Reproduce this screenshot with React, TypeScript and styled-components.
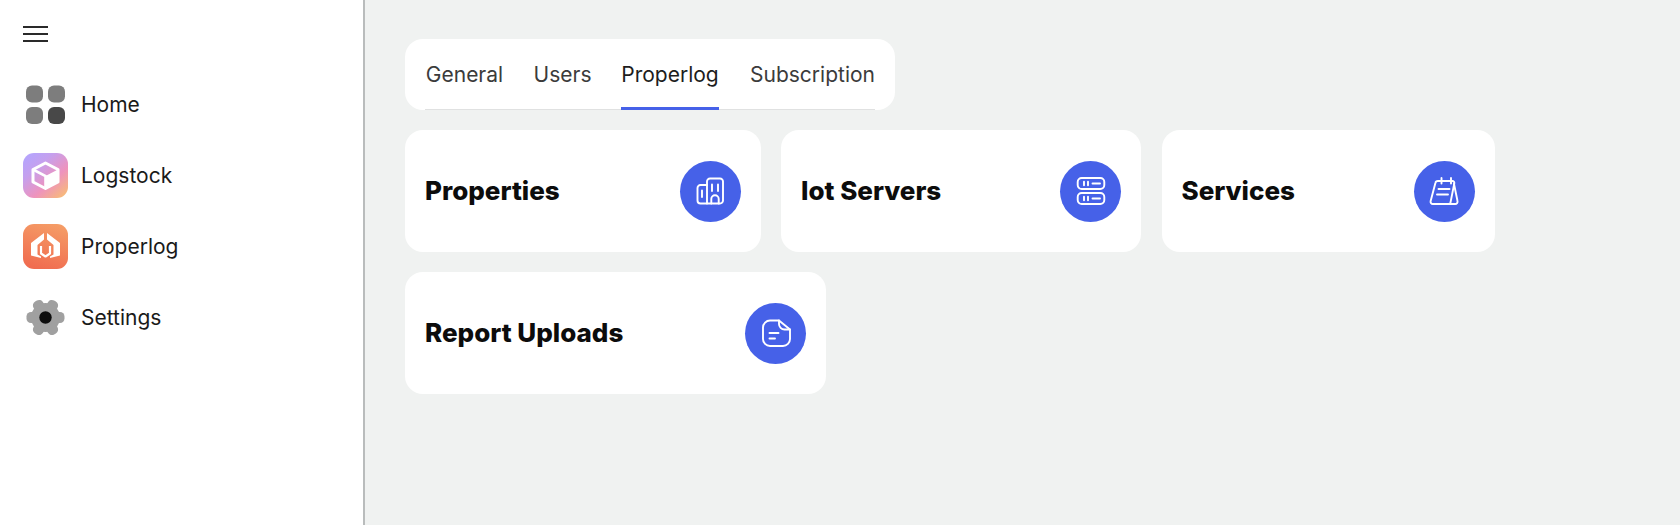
import * as React from "react";
import styled, { createGlobalStyle } from "styled-components";

const Global = createGlobalStyle`
  html, body { margin: 0; padding: 0; height: 100%; }
  body { font-family: "Inter", "Noto Sans", sans-serif; background: #f0f2f1; }
  #root { height: 100%; }
`;

const navItems = [
  { label: "Home", icon: <HomeIcon /> },
  { label: "Logstock", icon: <LogstockIcon /> },
  { label: "Properlog", icon: <ProperlogIcon /> },
  { label: "Settings", icon: <GearIcon /> },
];

const tabs = [
  { label: "General", width: 79 },
  { label: "Users", width: 55 },
  { label: "Properlog", width: 98 },
  { label: "Subscription", width: 125 },
];

const cards = [
  { title: "Properties", width: 355.5, icon: <BuildingIcon /> },
  { title: "Iot Servers", width: 360, icon: <ServerIcon /> },
  { title: "Services", width: 333, icon: <CalendarIcon /> },
  { title: "Report Uploads", width: 421, icon: <NoteIcon /> },
];

export default function App() {
  return (
    <Page>
      <Global />
      <Sidebar>
        <Burger aria-label="menu">
          <span />
          <span />
          <span />
        </Burger>
        <Nav>
          {navItems.map((item) => (
            <NavRow key={item.label}>
              <NavIcon>{item.icon}</NavIcon>
              <NavLabel>{item.label}</NavLabel>
            </NavRow>
          ))}
        </Nav>
      </Sidebar>
      <Main>
        <TabsCard>
          <TabRow>
            {tabs.map((tab) => (
              <Tab key={tab.label} $width={tab.width} $active={tab.label === "Properlog"}>
                {tab.label}
              </Tab>
            ))}
          </TabRow>
        </TabsCard>
        <CardGrid>
          {cards.map((card) => (
            <Card key={card.title} $width={card.width}>
              <CardTitle>{card.title}</CardTitle>
              <IconCircle>{card.icon}</IconCircle>
            </Card>
          ))}
        </CardGrid>
      </Main>
    </Page>
  );
}

function HomeIcon() {
  return (
    <svg width="45" height="45" viewBox="0 0 45 45">
      <rect x="3" y="3.500" width="17" height="17" rx="6" fill="#7d7d7d" />
      <rect x="25" y="3.500" width="17" height="17" rx="6" fill="#7d7d7d" />
      <rect x="3" y="25" width="17" height="17" rx="6" fill="#7d7d7d" />
      <rect x="25" y="25" width="17" height="17" rx="6" fill="#484848" />
    </svg>
  );
}

function LogstockIcon() {
  return (
    <svg width="45" height="45" viewBox="0 0 45 45">
      <defs>
        <linearGradient id="logstock" x1="0.12" y1="0.08" x2="0.92" y2="1">
          <stop offset="0" stopColor="#b7a4fb" />
          <stop offset="0.25" stopColor="#c5a0ee" />
          <stop offset="0.62" stopColor="#ee93bd" />
          <stop offset="1" stopColor="#f8bd74" />
        </linearGradient>
      </defs>
      <rect width="45" height="45" rx="11" fill="url(#logstock)" />
      <path
        d="M22.500 10 35 16.500v12.500L22.500 35.500 10 29V16.500Z"
        fill="none"
        stroke="#fff"
        strokeWidth="3"
        strokeLinejoin="round"
      />
      <path d="M22.500 23 35 16.500v12.500L22.500 35.500Z" fill="#fff" />
      <path d="M10 16.500 22.500 23v12.500" fill="none" stroke="#fff" strokeWidth="2.600" />
    </svg>
  );
}

function ProperlogIcon() {
  return (
    <svg width="45" height="45" viewBox="0 0 45 45">
      <defs>
        <linearGradient id="properlog" x1="0.7" y1="0" x2="0.4" y2="1">
          <stop offset="0" stopColor="#f59c66" />
          <stop offset="1" stopColor="#f06c50" />
        </linearGradient>
      </defs>
      <rect width="45" height="45" rx="11" fill="url(#properlog)" />
      <path
        d="M8 19 21 9v6.500l-6.500 5.500v9.500l3.500 2V34L8 31.500ZM37 19 24 9v6.500l6.500 5.500v9.500l-3.500 2V34L37 31.500Z"
        fill="#fff"
      />
      <path
        d="M18 22v7.500l4.500 3 4.500-3V22"
        fill="none"
        stroke="#fff"
        strokeWidth="2.200"
        strokeLinejoin="round"
      />
    </svg>
  );
}

function GearIcon() {
  const lobes = [0, 60, 120, 180, 240, 300];
  return (
    <svg width="45" height="45" viewBox="0 0 45 45">
      <circle cx="22.500" cy="22.500" r="14.500" fill="#a0a0a0" />
      {lobes.map((deg) => (
        <rect
          key={deg}
          x="31"
          y="17"
          width="10.500"
          height="11"
          rx="4.500"
          fill="#a0a0a0"
          transform={`rotate(${deg} 22.500 22.500)`}
        />
      ))}
      <circle cx="22.500" cy="22.500" r="6.200" fill="#0d0d0d" />
    </svg>
  );
}

function BuildingIcon() {
  return (
    <LineIcon viewBox="0 0 30 30">
      <path d="M12 9H5.500a3 3 0 0 0-3 3v12.500a3 3 0 0 0 3 3H12" />
      <path d="M12 27.500V5.500a3 3 0 0 1 3-3h10a3 3 0 0 1 3 3v19a3 3 0 0 1-3 3Z" />
      <path d="M7 14.500v6.500M17 8.500v6.500M23 8.500v6.500" />
      <path d="M16.300 27.500v-4.500a3.700 3.700 0 0 1 7.400 0v4.500" />
    </LineIcon>
  );
}

function ServerIcon() {
  return (
    <LineIcon viewBox="0 0 30 30">
      <rect x="1.700" y="2" width="26.600" height="11" rx="4" />
      <rect x="1.700" y="17" width="26.600" height="11" rx="4" />
      <path d="M8 5.800v3.400M12 5.800v3.400M16.500 7.500h7.500" />
      <path d="M8 20.800v3.400M12 20.800v3.400M16.500 22.500h7.500" />
    </LineIcon>
  );
}

function CalendarIcon() {
  return (
    <LineIcon viewBox="0 0 30 30">
      <path d="M8.800 5h14.500a2 2 0 0 1 2 2.400L21.500 26.500a2 2 0 0 1-2 1.500H3.800a2.300 2.300 0 0 1-2.200-2.800L6.400 7a2.500 2.500 0 0 1 2.400-2Z" />
      <path d="M12.500 2v5.500M22 2v5.500" />
      <path d="M9.500 13h11M8 18.500h11" />
      <path d="M25 8 28.500 25a2.400 2.400 0 0 1-2.300 3H20" />
    </LineIcon>
  );
}

function NoteIcon() {
  return (
    <LineIcon viewBox="0 0 30 30">
      <path d="M18 2.500H9A7 7 0 0 0 2 9.500V21a7 7 0 0 0 7 7h13a7 7 0 0 0 7-7v-9.500Z" />
      <path d="M18 2.500V6a5.500 5.500 0 0 0 5.500 5.500H29" />
      <path d="M8.500 15h9M8.500 20.500h5.500" />
    </LineIcon>
  );
}

const Page = styled.div`
  display: flex;
  min-height: 525px;
  height: 100%;
`;

const Sidebar = styled.aside`
  flex: none;
  width: 365px;
  box-sizing: border-box;
  background: #fff;
  border-right: 2px solid #b9bcbc;
  padding: 26px 0 0 23px;
`;

const Burger = styled.div`
  width: 25px;
  height: 16px;
  display: flex;
  flex-direction: column;
  justify-content: space-between;

  span {
    display: block;
    height: 2px;
    background: #2a2a2a;
  }
`;

const Nav = styled.nav`
  display: flex;
  flex-direction: column;
  gap: 26px;
  margin-top: 40px;
`;

const NavRow = styled.div`
  display: flex;
  align-items: center;
  gap: 13px;
  height: 45px;
`;

const NavIcon = styled.div`
  width: 45px;
  height: 45px;
  flex: none;

  svg {
    display: block;
  }
`;

const NavLabel = styled.span`
  font-size: 21px;
  color: #1a1a1a;
`;

const Main = styled.main`
  flex: 1;
  padding: 39px 0 0 40px;
  display: flex;
  flex-direction: column;
  align-items: flex-start;
  gap: 20px;
`;

const TabsCard = styled.div`
  background: #fff;
  border-radius: 18px;
  padding: 0 20px;
  height: 71px;
  box-sizing: border-box;
  display: flex;
`;

const TabRow = styled.div`
  display: flex;
  gap: 31px;
  align-items: stretch;
  border-bottom: 1px solid #e0e1e1;
  height: 71px;
  box-sizing: border-box;
`;

const Tab = styled.div<{ $active?: boolean; $width: number }>`
  width: ${(p) => p.$width}px;
  font-size: 21px;
  line-height: 71px;
  height: 71px;
  box-sizing: border-box;
  white-space: nowrap;
  display: flex;
  justify-content: center;
  color: ${(p) => (p.$active ? "#1d1d1d" : "#3b3b3b")};
  border-bottom: 3px solid ${(p) => (p.$active ? "#4661e8" : "transparent")};
`;

const CardGrid = styled.div`
  display: flex;
  flex-wrap: wrap;
  gap: 20px 20.5px;
  width: 1150px;
`;

const Card = styled.div<{ $width: number }>`
  width: ${(p) => p.$width}px;
  height: 122px;
  box-sizing: border-box;
  background: #fff;
  border-radius: 18px;
  padding: 0 20px;
  display: flex;
  align-items: center;
  justify-content: space-between;
`;

const CardTitle = styled.h3`
  margin: 0 0 1px;
  font-size: 26px;
  font-weight: 800;
  color: #0c0c0c;
`;

const IconCircle = styled.div`
  width: 61px;
  height: 61px;
  border-radius: 50%;
  background: #4661e8;
  display: flex;
  align-items: center;
  justify-content: center;
`;

const LineIcon = styled.svg`
  width: 30px;
  height: 30px;
  fill: none;
  stroke: #fff;
  stroke-width: 1.9;
  stroke-linecap: round;
  stroke-linejoin: round;
`;
